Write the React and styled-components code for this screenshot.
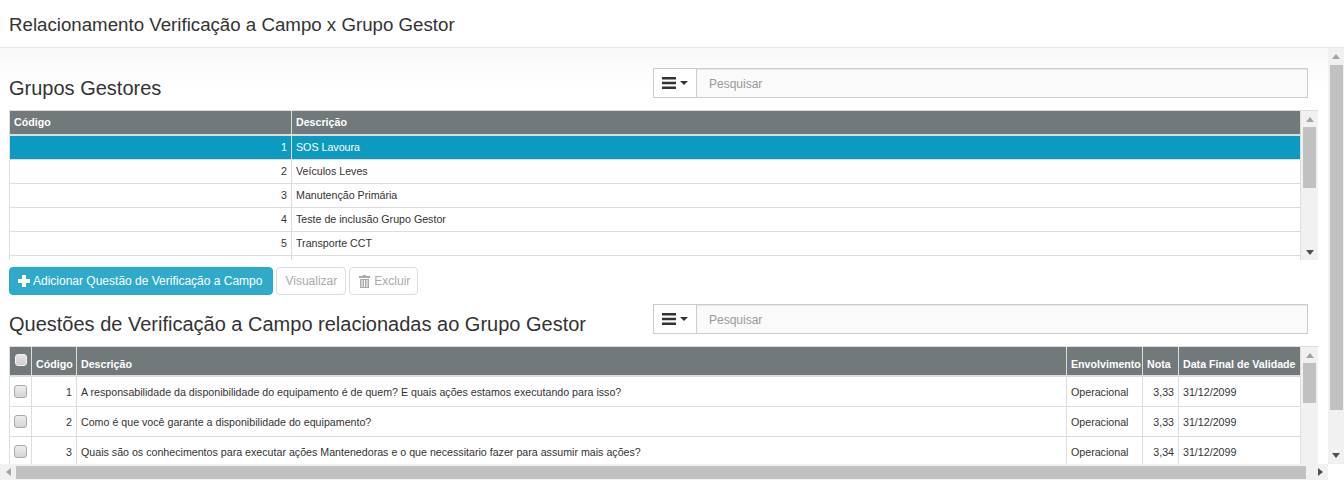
import React from "react";
import styled, { createGlobalStyle } from "styled-components";

const grupos = [
  [1, "SOS Lavoura"],
  [2, "Veículos Leves"],
  [3, "Manutenção Primária"],
  [4, "Teste de inclusão Grupo Gestor"],
  [5, "Transporte CCT"],
  [6, ""],
];

const questoes = [
  [1, "A responsabilidade da disponibilidade do equipamento é de quem? E quais ações estamos executando para isso?", "3,33"],
  [2, "Como é que você garante a disponibilidade do equipamento?", "3,33"],
  [3, "Quais são os conhecimentos para executar ações Mantenedoras e o que necessitario fazer para assumir mais ações?", "3,34"],
];

const GlobalStyle = createGlobalStyle`
  html, body {
    margin: 0;
    padding: 0;
    overflow: hidden;
    background: #fff;
  }
  * {
    box-sizing: border-box;
  }
  body {
    font-family: "Liberation Sans", Arial, sans-serif;
    color: #333;
  }
`;

const Page = styled.div`
  width: 1344px;
  height: 480px;
  display: flex;
  flex-direction: column;
  overflow: hidden;
`;

const TitleBar = styled.header`
  height: 48px;
  flex: none;
  padding: 14px 0 0 9px;
  border-bottom: 1px solid #e7e7e7;
  font-size: 18.7px;
  line-height: 21px;
  color: #333;
`;

const Viewport = styled.div`
  flex: 1;
  min-height: 0;
  display: grid;
  grid-template-columns: 1fr 16px;
  grid-template-rows: 1fr 16px;
`;

const Content = styled.main`
  overflow: hidden;
  padding: 0 20px 0 9px;
  background: linear-gradient(#f8f8f8, #fff 40px);
`;

const SectionHead = styled.div`
  display: flex;
  justify-content: space-between;
  align-items: flex-end;
  height: ${(p) => p.$height}px;
  margin-bottom: 12px;
`;

const SectionTitle = styled.h2`
  margin: 0 0 ${(p) => p.$bottom}px;
  font-size: 20px;
  line-height: 22px;
  font-weight: 400;
  color: #333;
`;

const SearchGroup = styled.div`
  width: 655px;
  height: 30px;
  display: flex;
`;

const MenuButton = styled.div`
  width: 44px;
  display: flex;
  align-items: center;
  padding-left: 8px;
  gap: 4px;
  background: #fff;
  border: 1px solid #ccc;
`;

const Caret = styled.span`
  width: 0;
  height: 0;
  border-left: 4px solid transparent;
  border-right: 4px solid transparent;
  border-top: 4px solid #333;
`;

const SearchInput = styled.input`
  flex: 1;
  margin-left: -1px;
  padding: 2px 12px 0;
  border: 1px solid #ccc;
  background: #fafafa;
  box-shadow: inset 0 1px 1px rgba(0, 0, 0, 0.075);
  font: 12px "Liberation Sans", Arial, sans-serif;
  &::placeholder {
    color: #999;
    opacity: 1;
  }
`;

const TablePanel = styled.div`
  display: flex;
  height: ${(p) => p.$height}px;
  width: 1309px;
  border-top: 1px solid #ddd;
  border-left: 1px solid #ddd;
`;

const TableClip = styled.div`
  flex: 1;
  min-width: 0;
  overflow: hidden;
  background: #fff;
  border-right: 1px solid #ddd;
`;

const Grid = styled.table`
  width: 100%;
  table-layout: fixed;
  border-collapse: separate;
  border-spacing: 0;
  font-size: 10.67px;
  color: #333;
`;

const Th = styled.th`
  height: ${(p) => p.$height}px;
  padding: ${(p) => p.$top || 0}px 4px ${(p) => p.$under || 0}px;
  background: #72797b;
  color: #fff;
  font-weight: 700;
  font-size: 10.67px;
  text-align: left;
  white-space: nowrap;
  overflow: hidden;
  border-left: ${(p) => (p.$first ? "0" : "1px solid #ddd")};
  border-bottom: 2px solid #ddd;
`;

const Td = styled.td`
  height: ${(p) => p.$height}px;
  padding: 0 4px ${(p) => p.$under || 0}px;
  white-space: nowrap;
  overflow: hidden;
  text-align: ${(p) => (p.$right ? "right" : "left")};
  border-left: ${(p) => (p.$first ? "0" : "1px solid #ddd")};
  border-bottom: 1px solid #ddd;
  background: ${(p) => (p.$active ? "#0d9ac0" : "#fff")};
  color: ${(p) => (p.$active ? "#fff" : "#333")};
`;

const Check = styled.span`
  display: block;
  width: 13px;
  height: 13px;
  border: 1px solid #aaa;
  border-radius: 3px;
  background: linear-gradient(#eee, #d4d4d4);
`;

const HeadCheck = styled(Check)`
  width: 12px;
  height: 12px;
  margin: -3px 0 0 1px;
  border-color: #f2f2f2;
  background: linear-gradient(#e4e4e4, #cfcfcf);
`;

const Actions = styled.div`
  display: flex;
  gap: 3px;
  padding-top: 7px;
`;

const Button = styled.button`
  height: 28px;
  padding: 0 8px;
  display: flex;
  align-items: center;
  gap: 4px;
  font: 12px "Liberation Sans", Arial, sans-serif;
  border-radius: 4px;
  border: 1px solid #ddd;
  background: #fff;
  color: #aaa;
`;

const PrimaryButton = styled(Button)`
  padding: 0 10px 0 8px;
  gap: 3px;
  border-color: #2ba5c8;
  background: #2faacb;
  color: #fff;
`;

const IconButton = styled(Button)`
  padding: 0 7px 0 9px;
`;

const Bar = styled.div`
  display: flex;
  flex-direction: ${(p) => (p.$horizontal ? "row" : "column")};
  align-items: center;
  flex: none;
  background: #f1f1f1;
  width: ${(p) => (p.$width ? `${p.$width}px` : "auto")};
`;

const Arrow = styled.span`
  flex: none;
  width: 0;
  height: 0;
  border: 4px solid transparent;
  ${(p) => (p.$dir === "up" ? "border-bottom: 5px solid #a3a3a3; border-top: 0;" : "")}
  ${(p) => (p.$dir === "down" ? "border-top: 5px solid #505050; border-bottom: 0;" : "")}
  ${(p) => (p.$dir === "left" ? "border-right: 5px solid #a3a3a3; border-left: 0;" : "")}
  ${(p) => (p.$dir === "right" ? "border-left: 5px solid #505050; border-right: 0;" : "")}
`;

const ArrowSlot = styled.div`
  flex: none;
  display: flex;
  align-items: center;
  justify-content: center;
  width: ${(p) => p.$w}px;
  height: ${(p) => p.$h}px;
`;

const Thumb = styled.div`
  background: #c1c1c1;
  ${(p) =>
    p.$horizontal
      ? `height: 13px; width: ${p.$size}px;`
      : `width: ${p.$w}px; height: ${p.$size}px;`}
`;

const Spacer = styled.div`
  flex: 1;
`;

const Corner = styled.div`
  background: #fff;
`;

const MenuIcon = () => (
  <svg width="14" height="12" viewBox="0 0 14 12">
    <path d="M0 0h14v2.4H0zM0 4.8h14v2.4H0zM0 9.6h14V12H0z" fill="#333" />
  </svg>
);

const PlusIcon = () => (
  <svg width="12" height="12" viewBox="0 0 12 12">
    <path d="M4 0h4v4h4v4H8v4H4V8H0V4h4z" fill="currentColor" />
  </svg>
);

const TrashIcon = () => (
  <svg width="11" height="13" viewBox="0 0 11 13">
    <path
      d="M4 0h3v1h4v2H0V1h4zM1 4h9v9H1zM2.5 5v7h1V5zM5 5v7h1V5zM7.5 5v7h1V5z"
      fill="currentColor"
      fillRule="evenodd"
    />
  </svg>
);

const SearchBar = () => (
  <SearchGroup>
    <MenuButton>
      <MenuIcon />
      <Caret />
    </MenuButton>
    <SearchInput placeholder="Pesquisar" readOnly />
  </SearchGroup>
);

const VBar = ({ width, thumbW, thumb, slot }) => (
  <Bar $width={width}>
    <ArrowSlot $w={width} $h={slot}>
      <Arrow $dir="up" />
    </ArrowSlot>
    <Thumb $w={thumbW} $size={thumb} />
    <Spacer />
    <ArrowSlot $w={width} $h={slot}>
      <Arrow $dir="down" />
    </ArrowSlot>
  </Bar>
);

export default function App() {
  return (
    <Page>
      <GlobalStyle />
      <TitleBar>Relacionamento Verificação a Campo x Grupo Gestor</TitleBar>
      <Viewport>
        <Content>
          <SectionHead $height={50}>
            <SectionTitle $bottom={-1}>Grupos Gestores</SectionTitle>
            <SearchBar />
          </SectionHead>
          <TablePanel $height={150}>
            <TableClip>
              <Grid>
                <colgroup>
                  <col width="281" />
                  <col />
                </colgroup>
                <thead>
                  <tr>
                    <Th $height={25} $under={2} $first>Código</Th>
                    <Th $height={25} $under={2}>Descrição</Th>
                  </tr>
                </thead>
                <tbody>
                  {grupos.map(([id, name]) => (
                    <tr key={id}>
                      <Td $height={24} $under={2} $first $right $active={id === 1}>{id === 6 ? "" : id}</Td>
                      <Td $height={24} $under={2} $active={id === 1}>{name}</Td>
                    </tr>
                  ))}
                </tbody>
              </Grid>
            </TableClip>
            <VBar width={17} thumbW={13} thumb={61} slot={16} />
          </TablePanel>
          <Actions>
            <PrimaryButton>
              <PlusIcon />
              Adicionar Questão de Verificação a Campo
            </PrimaryButton>
            <Button>Visualizar</Button>
            <IconButton>
              <TrashIcon />
              Excluir
            </IconButton>
          </Actions>
          <SectionHead $height={39}>
            <SectionTitle $bottom={-1}>Questões de Verificação a Campo relacionadas ao Grupo Gestor</SectionTitle>
            <SearchBar />
          </SectionHead>
          <TablePanel $height={130}>
            <TableClip>
              <Grid>
                <colgroup>
                  <col width="21" />
                  <col width="45" />
                  <col />
                  <col width="76" />
                  <col width="36" />
                  <col width="122" />
                </colgroup>
                <thead>
                  <tr>
                    <Th $height={30} $first><HeadCheck /></Th>
                    <Th $height={30} $top={5}>Código</Th>
                    <Th $height={30} $top={5}>Descrição</Th>
                    <Th $height={30} $top={5}>Envolvimento</Th>
                    <Th $height={30} $top={5}>Nota</Th>
                    <Th $height={30} $top={5}>Data Final de Validade</Th>
                  </tr>
                </thead>
                <tbody>
                  {questoes.map(([id, text, nota]) => (
                    <tr key={id}>
                      <Td $height={30} $first><Check /></Td>
                      <Td $height={30} $right>{id}</Td>
                      <Td $height={30}>{text}</Td>
                      <Td $height={30}>Operacional</Td>
                      <Td $height={30} $right>{nota}</Td>
                      <Td $height={30}>31/12/2099</Td>
                    </tr>
                  ))}
                </tbody>
              </Grid>
            </TableClip>
            <VBar width={17} thumbW={13} thumb={40} slot={16} />
          </TablePanel>
        </Content>
        <VBar width={16} thumbW={13} thumb={345} slot={17} />
        <Bar $horizontal>
          <ArrowSlot $w={16} $h={16}>
            <Arrow $dir="left" />
          </ArrowSlot>
          <Thumb $horizontal $size={1290} />
          <Spacer />
          <ArrowSlot $w={16} $h={16}>
            <Arrow $dir="right" />
          </ArrowSlot>
        </Bar>
        <Corner />
      </Viewport>
    </Page>
  );
}
